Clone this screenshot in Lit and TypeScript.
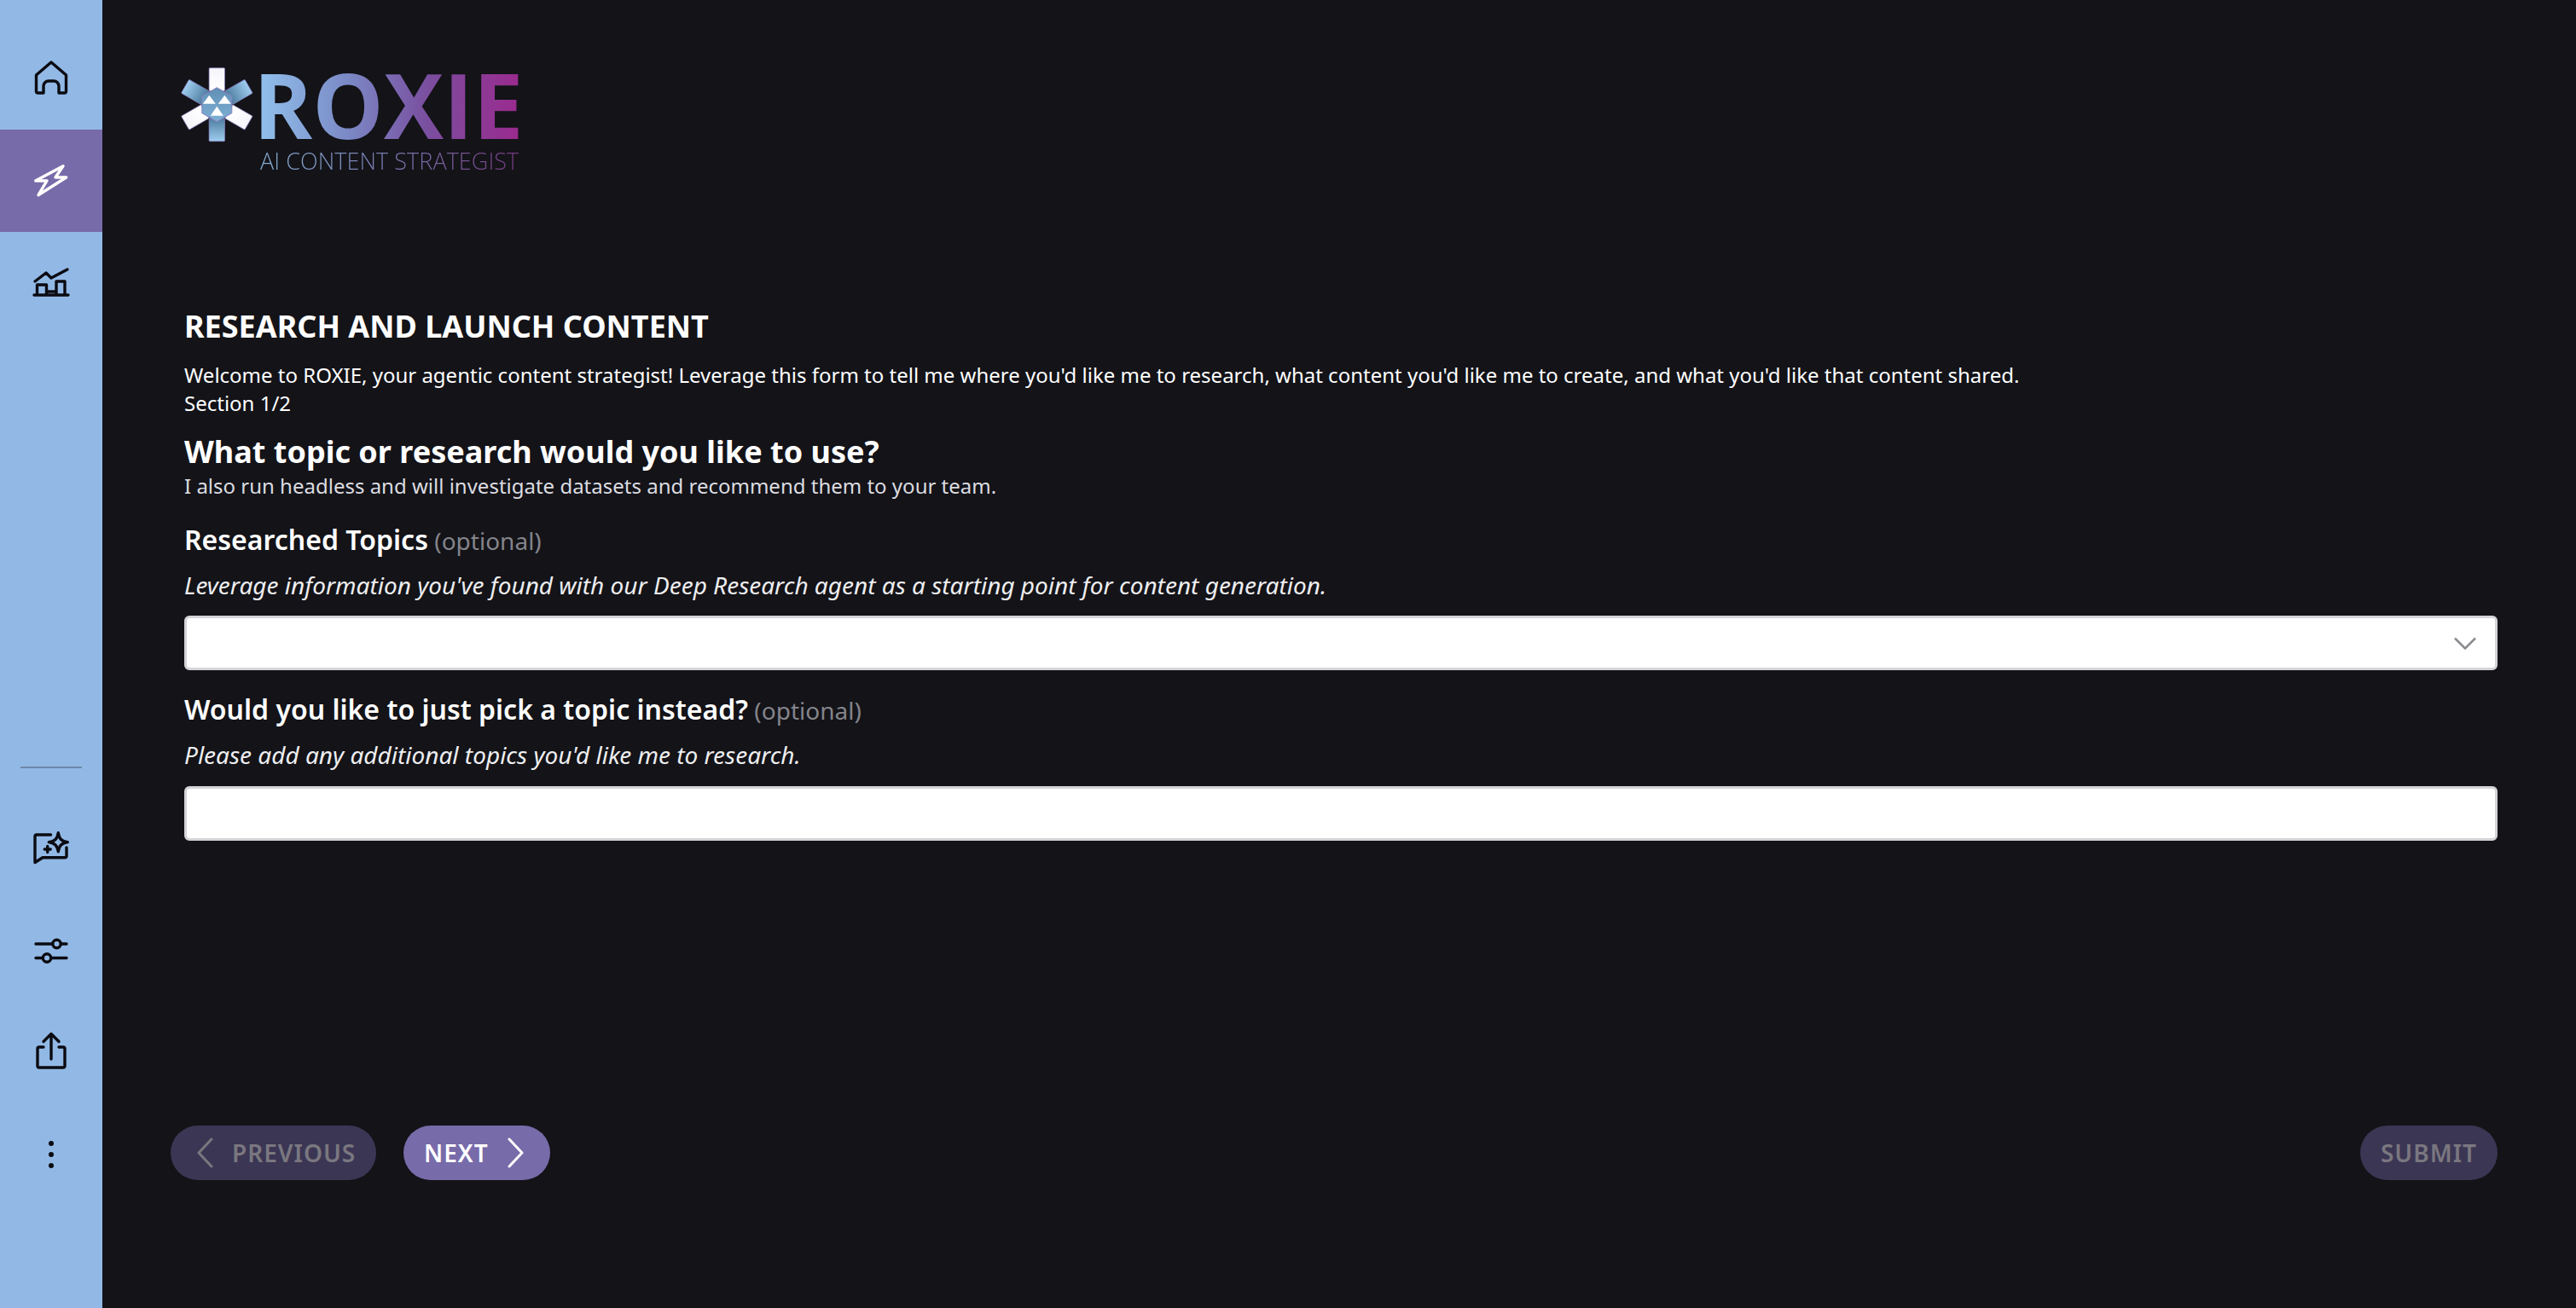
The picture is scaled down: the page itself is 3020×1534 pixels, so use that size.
import { LitElement, html, css, svg } from "lit";
import { customElement } from "lit/decorators.js";

const ic = (body: unknown, cls = "") => html`<svg class="icon ${cls}" viewBox="0 0 60 60" width="60" height="60">${body}</svg>`;

const home = svg`<path d="M12.5 26 30 11 47.5 26V45a2 2 0 0 1-2 2H39V39a6 6 0 0 0-6-6h-6a6 6 0 0 0-6 6v8H14.5a2 2 0 0 1-2-2Z"/>`;
const bolt = svg`<path d="M44 12.7 11.7 30H25L15 46.7 47.7 26H35Z"/>`;
const chart = svg`<path d="M10 44H50M11 28 24 18 30 24 49 14M13.5 44V32H24.5V44M24.5 40H36M36 44V28H46V44"/>`;
const chat = svg`<path d="M29.5 15H13a2 2 0 0 0-2 2V47.5L20 41.7H46a2 2 0 0 0 2-2V30M22.2 32H29.2M25.7 28.5V35.5"/><path d="M38.3 12.7C39.5 20 42 22.5 49.3 23.7 42 25 39.5 27.5 38.3 34.7 37 27.5 34.5 25 27.3 23.7 34.5 22.5 37 20 38.3 12.7Z"/>`;
const sliders = svg`<path d="M12 23H31.5M41.5 23H48M12 39.5H20M30 39.5H48"/><circle cx="36.5" cy="23" r="4.7"/><circle cx="25" cy="39.5" r="4.7"/>`;
const share = svg`<path d="M30 38V9M21 17.5 30 8.500 39 17.5M21 24H16a2 2 0 0 0-2 2V46a2 2 0 0 0 2 2H44a2 2 0 0 0 2-2V26a2 2 0 0 0-2-2H39"/>`;
const dots = svg`<circle class="fill" cx="30" cy="17" r="3"/><circle class="fill" cx="30" cy="30" r="3"/><circle class="fill" cx="30" cy="43" r="3"/>`;

const arm = (angle: number, fill: string) => svg`<rect x="-9.2" y="-43" width="18.4" height="27" rx="1" fill="${fill}" stroke="#8a7fc0" stroke-width=".7" transform="rotate(${angle})"/>`;

const mark = html`<svg class="mark" viewBox="0 0 100 105" width="100" height="105">
  <defs>
    <linearGradient id="blue" x1="0" y1="0" x2="0" y2="1"><stop offset="0" stop-color="#9fcdf0"/><stop offset="1" stop-color="#4d7d9f"/></linearGradient>
    <linearGradient id="white" x1="0" y1="0" x2="0" y2="1"><stop offset="0" stop-color="#f6f4fa"/><stop offset="1" stop-color="#ffffff"/></linearGradient>
    <linearGradient id="core" x1="0" y1="0" x2="0" y2="1"><stop offset="0" stop-color="#5f8fb3"/><stop offset="1" stop-color="#7fb0d6"/></linearGradient>
  </defs>
  <g transform="translate(49.3 52.7)">
    ${arm(0, "url(#white)")}${arm(60, "url(#blue)")}${arm(120, "url(#white)")}${arm(180, "url(#blue)")}${arm(240, "url(#white)")}${arm(300, "url(#blue)")}
    <polygon points="0,-20 17.5,-10 17.5,10 0,20 -17.5,10 -17.5,-10" fill="url(#core)" stroke="#8a7fc0" stroke-width="1"/>
    <polygon points="-9,-11 -1.5,-1 -16.5,-1" fill="#fff"/>
    <polygon points="9,-11 16.5,-1 1.5,-1" fill="#fff"/>
    <polygon points="0,2 7.5,13 -7.5,13" fill="#fff"/>
  </g>
</svg>`;

const chevron = (d: string) => html`<svg class="chev" viewBox="0 0 20 36" width="20" height="36"><path d="${d}"/></svg>`;

@customElement("app-root")
export class AppRoot extends LitElement {
  static styles = css`
    :host { display: flex; width: 100%; height: 100vh; background: #131318; color: #fff; font-family: "Noto Sans", sans-serif; overflow: hidden; }
    * { box-sizing: border-box; }
    .side { width: 120px; flex: none; background: #92b9e5; display: flex; flex-direction: column; padding-top: 32px; padding-bottom: 120px; }
    .item { height: 120px; display: flex; align-items: center; justify-content: center; }
    .item.active { background: #786ba9; }
    .icon { fill: none; stroke: #0b0b12; stroke-width: 3.4; stroke-linecap: round; stroke-linejoin: round; }
    .icon .fill { fill: #0b0b12; stroke: none; }
    .active .icon { stroke: #fff; }
    .spacer { flex: 1; }
    .rule { height: 2px; margin: 0 24px 33px; background: #6d88a8; }
    .main { flex: 1; min-width: 0; display: flex; flex-direction: column; padding: 70px 92px 0 96px; }
    .logo { display: flex; margin-left: -11px; height: 140px; }
    .mark { flex: none; }
    .words { display: flex; flex-direction: column; width: 304px; margin-top: 3px; }
    .roxie { font-family: "Open Sans", sans-serif; font-weight: 700; font-size: 105px; line-height: 100px; margin-left: -8px; white-space: nowrap; background: linear-gradient(90deg, #92c4ee 0%, #7b8ac6 35%, #7a4fa0 65%, #9a2a8e 100%); -webkit-background-clip: text; background-clip: text; color: transparent; }
    .tag { font-family: "Open Sans", sans-serif; font-weight: 300; font-size: 27px; letter-spacing: 0.06px; line-height: 32px; white-space: nowrap; background: linear-gradient(90deg, #86aed0 0%, #7878ae 50%, #74387f 100%); -webkit-background-clip: text; background-clip: text; color: transparent; }
    h1 { margin: 151px 0 0; font-size: 36px; line-height: 44px; font-weight: 700; }
    .intro { margin: 18px 0 0; font-size: 24px; line-height: 33px; }
    h2 { margin: 18px 0 0; font-size: 36px; line-height: 45px; font-weight: 700; }
    .sub { margin: 0; font-size: 24px; line-height: 36px; color: #dcdce0; }
    .field { display: flex; flex-direction: column; }
    .label { margin-top: 23px; font-size: 32px; line-height: 44px; font-weight: 600; }
    .field + .field .label { margin-top: 24px; }
    .opt { font-size: 28px; font-weight: 400; color: #84848a; margin-left: -1px; }
    .hint { margin-top: 10px; font-size: 28px; line-height: 40px; font-style: italic; color: #eeeef0; }
    .box { margin-top: 16px; height: 64px; background: #fff; border: 3px solid #d4d4d8; border-radius: 6px; display: flex; align-items: center; justify-content: flex-end; padding-right: 22px; }
    .field + .field .box { margin-top: 17px; }
    .box svg { fill: none; stroke: #8b8b8f; stroke-width: 2.5; }
    .actions { margin: auto 0 150px -16px; display: flex; align-items: center; gap: 32px; }
    .btn { height: 64px; border-radius: 32px; display: flex; align-items: center; font-size: 28px; font-weight: 600; letter-spacing: 1px; background: #786ba9; color: #fff; padding: 0 24px; }
    .btn.off { background: #3b3654; color: #7a777f; }
    .btn.prev { padding-left: 30px; gap: 22px; width: 241px; }
    .btn.next { gap: 22px; width: 172px; }
    .btn.submit { margin-left: auto; width: 161px; justify-content: center; padding: 0; }
    .chev { fill: none; stroke: currentColor; stroke-width: 3; stroke-linecap: round; stroke-linejoin: round; flex: none; }
  `;

  render() {
    return html`
      <nav class="side">
        <div class="item">${ic(home)}</div>
        <div class="item active">${ic(bolt)}</div>
        <div class="item">${ic(chart)}</div>
        <div class="spacer"></div>
        <div class="rule"></div>
        <div class="item">${ic(chat)}</div>
        <div class="item">${ic(sliders)}</div>
        <div class="item">${ic(share)}</div>
        <div class="item">${ic(dots)}</div>
      </nav>
      <main class="main">
        <div class="logo">
          ${mark}
          <div class="words">
            <div class="roxie">ROXIE</div>
            <div class="tag">AI CONTENT STRATEGIST</div>
          </div>
        </div>
        <h1>RESEARCH AND LAUNCH CONTENT</h1>
        <p class="intro">Welcome to ROXIE, your agentic content strategist! Leverage this form to tell me where you'd like me to research, what content you'd like me to create, and what you'd like that content shared.<br />Section 1/2</p>
        <h2>What topic or research would you like to use?</h2>
        <p class="sub">I also run headless and will investigate datasets and recommend them to your team.</p>
        <div class="field">
          <div class="label">Researched Topics <span class="opt">(optional)</span></div>
          <div class="hint">Leverage information you've found with our Deep Research agent as a starting point for content generation.</div>
          <div class="box"><svg viewBox="0 0 26 15" width="26" height="15"><path d="M1 1.5 13 13.5 25 1.5" /></svg></div>
        </div>
        <div class="field">
          <div class="label">Would you like to just pick a topic instead? <span class="opt">(optional)</span></div>
          <div class="hint">Please add any additional topics you'd like me to research.</div>
          <div class="box"></div>
        </div>
        <div class="actions">
          <div class="btn off prev">${chevron("M18 2 3 18 18 34")}<span>PREVIOUS</span></div>
          <div class="btn next"><span>NEXT</span>${chevron("M2 2 17 18 2 34")}</div>
          <div class="btn off submit">SUBMIT</div>
        </div>
      </main>
    `;
  }
}
